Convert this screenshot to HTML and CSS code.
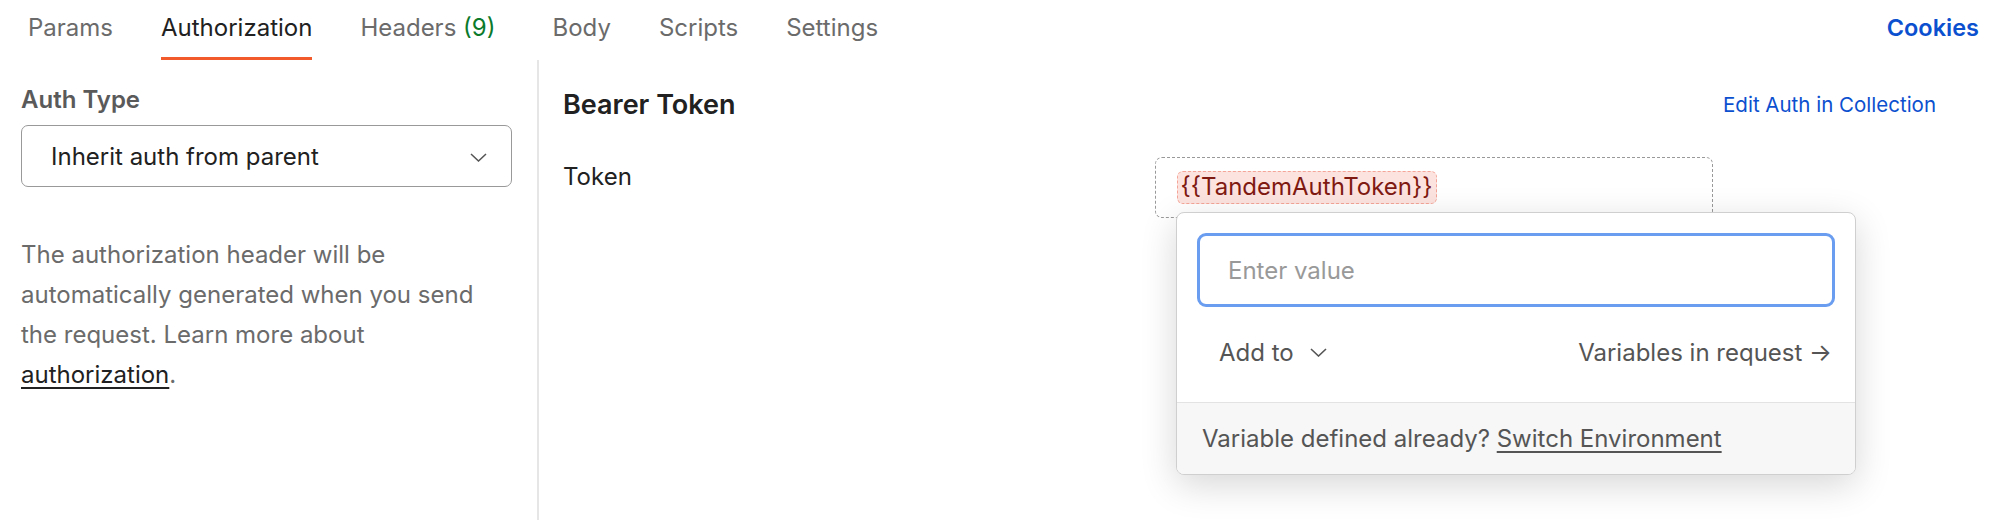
FILE: index.html
```html
<!DOCTYPE html>
<html>
<head>
<meta charset="utf-8">
<link rel="stylesheet" href="styles.css">
</head>
<body>
<div class="page">
  <div class="tabs">
    <div class="tablist">
      <span class="tab">Params</span>
      <span class="tab active">Authorization</span>
      <span class="tab tab-headers">Headers <span class="count">(9)</span></span>
      <span class="tab">Body</span>
      <span class="tab">Scripts</span>
      <span class="tab">Settings</span>
    </div>
    <span class="cookies">Cookies</span>
  </div>
  <div class="main">
    <div class="left">
      <div class="label">Auth Type</div>
      <div class="select">
        <span>Inherit auth from parent</span>
        <svg class="chev" width="17" height="9" viewBox="0 0 17 9"><polyline points="1,1 8.5,8 16,1" fill="none" stroke="#555" stroke-width="1.5"/></svg>
      </div>
      <p class="desc">The authorization header will be automatically generated when you send the request. Learn more about <a class="link">authorization</a>.</p>
    </div>
    <div class="divider"></div>
    <div class="right">
      <div class="head">
        <span class="title">Bearer Token</span>
        <span class="edit">Edit Auth in Collection</span>
      </div>
      <div class="row">
        <div class="rlabel">Token</div>
        <div class="valuecell">
          <div class="dashbox"><span class="chip">{{TandemAuthToken}}</span></div>
          <div class="popover">
            <div class="pbody">
              <div class="input">Enter value</div>
              <div class="actions">
                <span class="addto">Add to
                  <svg width="17" height="9" viewBox="0 0 17 9"><polyline points="1,1 8.5,8 16,1" fill="none" stroke="#555" stroke-width="1.6"/></svg>
                </span>
                <span class="vars">Variables in request →</span>
              </div>
            </div>
            <div class="pfoot">Variable defined already?&nbsp;<a class="switch">Switch Environment</a></div>
          </div>
        </div>
      </div>
    </div>
  </div>
</div>
</body>
</html>
```
FILE: styles.css
```css
* { box-sizing: border-box; }
html, body { margin: 0; padding: 0; background: #fff; }
body { font-family: Inter, "Noto Sans", sans-serif; color: #212121; width: 2002px; height: 520px; overflow: hidden; }
.page { display: flex; flex-direction: column; height: 520px; }
.tabs { display: flex; justify-content: space-between; align-items: flex-start; height: 60px; padding: 0 23px 0 4px; }
.tablist { display: flex; }
.tab { font-size: 24px; line-height: 56px; color: #6b6b6b; padding: 0 24px; position: relative; height: 60px; white-space: nowrap; }
.tab-headers { margin-right: 9px; }
.tab.active { color: #212121; }
.tab.active::after { content: ""; position: absolute; left: 24px; right: 24px; top: 57px; height: 3px; background: #f25a2b; }
.count { color: #0b7a2b; }
.cookies { font-size: 23.5px; line-height: 56px; color: #0b50cf; font-weight: 600; }
.main { display: flex; flex: 1; }
.left { width: 537px; padding: 25px 25px 0 21px; }
.label { font-size: 24px; font-weight: 600; color: #5a5a5a; line-height: 30px; }
.select { margin-top: 10px; height: 62px; border: 1.5px solid #999; border-radius: 7px; display: flex; align-items: center; justify-content: space-between; padding: 0 24px 0 29px; font-size: 24px; color: #212121; }
.chev { margin-top: 2px; }
.desc { margin: 48px 0 0; font-size: 24px; line-height: 40px; color: #6b6b6b; }
.link { color: #212121; text-decoration: underline; text-underline-offset: 4px; }
.divider { width: 2px; background: #e6e6e6; }
.right { flex: 1; padding: 24px 66px 0 24px; }
.head { display: flex; justify-content: space-between; align-items: center; height: 40px; }
.title { font-size: 27px; font-weight: 600; color: #212121; }
.edit { font-size: 20.5px; color: #0b50cf; }
.row { display: grid; grid-template-columns: 592px 558px; margin-top: 33px; }
.rlabel { font-size: 24px; line-height: 40px; color: #212121; }
.valuecell { position: relative; }
.dashbox { height: 61px; border: 1.5px dashed #999; border-radius: 7px; padding: 12.5px 0 0 20.5px; }
.chip { display: inline-block; height: 33px; line-height: 30px; padding: 0 3px; background: #fde3df; border: 1.5px dashed #f4a597; border-radius: 6px; color: #7f1a12; font-size: 24px; white-space: nowrap; }
.popover { position: absolute; left: 21px; top: 55px; width: 680px; height: 263px; background: #fff; border: 1.5px solid #cfcfcf; border-radius: 8px; box-shadow: 0 10px 36px rgba(0,0,0,0.16); display: flex; flex-direction: column; overflow: hidden; }
.pbody { padding: 20px 20px 0 20px; height: 189px; }
.input { height: 74px; border: 3px solid #6a9df0; border-radius: 9px; padding-left: 28px; display: flex; align-items: center; font-size: 24px; color: #999; }
.actions { display: flex; justify-content: space-between; align-items: center; height: 90px; padding: 0 3px 0 22px; font-size: 24px; color: #555; }
.addto { display: flex; align-items: center; gap: 16px; }
.pfoot { flex: 1; background: #f7f7f7; border-top: 1.5px solid #e3e3e3; display: flex; align-items: center; padding-left: 25px; font-size: 24px; color: #555; white-space: nowrap; }
.switch { color: #555; text-decoration: underline; text-underline-offset: 4px; }
```
